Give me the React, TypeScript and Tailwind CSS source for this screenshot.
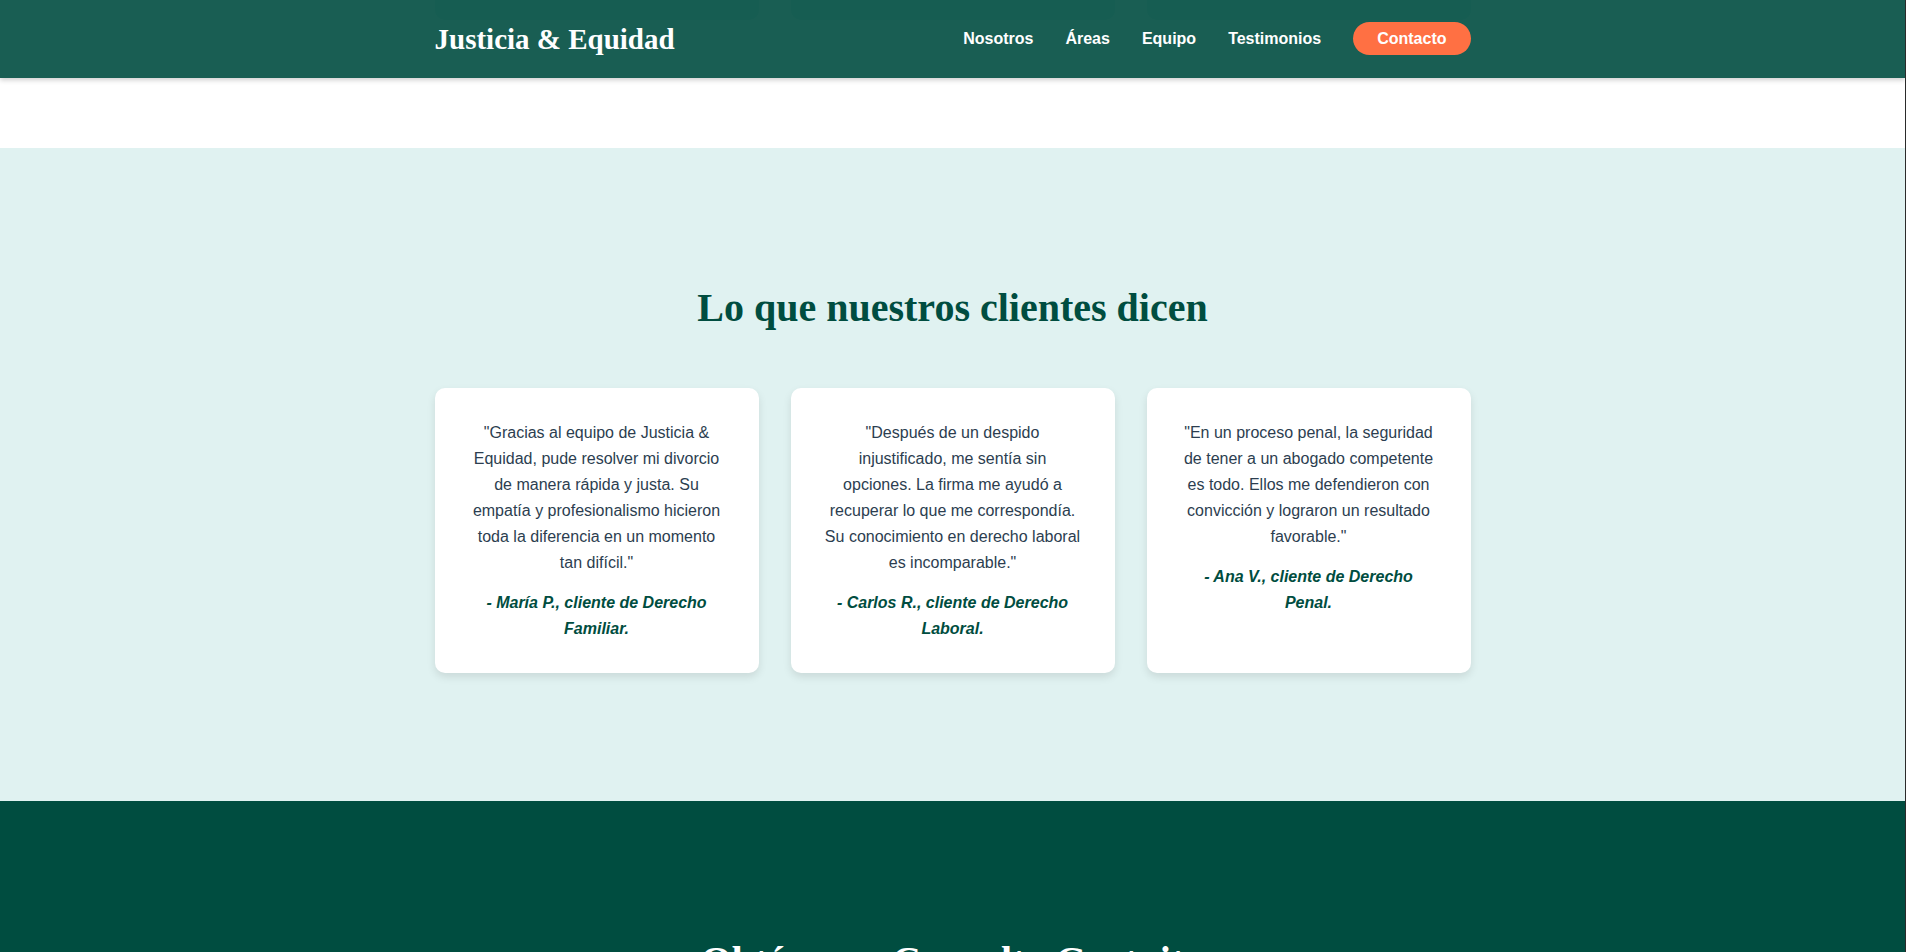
const links = [
  { label: "Nosotros", href: "#nosotros" },
  { label: "Áreas", href: "#areas" },
  { label: "Equipo", href: "#equipo" },
  { label: "Testimonios", href: "#testimonios" },
];

const testimonials = [
  {
    quote:
      '"Gracias al equipo de Justicia & Equidad, pude resolver mi divorcio de manera rápida y justa. Su empatía y profesionalismo hicieron toda la diferencia en un momento tan difícil."',
    author: "- María P., cliente de Derecho Familiar.",
  },
  {
    quote:
      '"Después de un despido injustificado, me sentía sin opciones. La firma me ayudó a recuperar lo que me correspondía. Su conocimiento en derecho laboral es incomparable."',
    author: "- Carlos R., cliente de Derecho Laboral.",
  },
  {
    quote:
      '"En un proceso penal, la seguridad de tener a un abogado competente es todo. Ellos me defendieron con convicción y lograron un resultado favorable."',
    author: "- Ana V., cliente de Derecho Penal.",
  },
];

function Header() {
  return (
    <header className="absolute inset-x-0 top-0 z-10 bg-[#004d40]/90 py-4 text-white shadow-[0_2px_5px_rgba(0,0,0,0.2)]">
      <div className="mx-auto flex max-w-[1100px] items-center justify-between px-8">
        <a
          href="#inicio"
          className="font-['Liberation_Serif',serif] text-[29px] leading-[46px] font-bold"
        >
          Justicia &amp; Equidad
        </a>
        <nav className="flex items-center gap-8 pb-px font-bold">
          {links.map((link) => (
            <a key={link.href} href={link.href}>
              {link.label}
            </a>
          ))}
          <a
            href="#contacto"
            className="rounded-full bg-[#ff7043] px-6 py-2 leading-[17px]"
          >
            Contacto
          </a>
        </nav>
      </div>
    </header>
  );
}

function Team() {
  return (
    <section id="equipo" className="bg-white pb-32">
      <div className="mx-auto grid max-w-[1100px] grid-cols-3 gap-8 px-8">
        <div className="h-5 rounded-b-[10px] bg-[#e0f2f1]" />
        <div className="h-5 rounded-b-[10px] bg-[#e0f2f1]" />
        <div className="h-5 rounded-b-[10px] bg-[#e0f2f1]" />
      </div>
    </section>
  );
}

function Testimonials() {
  return (
    <section id="testimonios" className="bg-[#e0f2f1] py-32">
      <div className="mx-auto max-w-[1100px] px-8 text-center">
        <h2 className="mb-12 font-['Liberation_Serif',serif] text-[40px] leading-[64px] font-bold text-[#004d40]">
          Lo que nuestros clientes dicen
        </h2>
        <div className="grid grid-cols-3 gap-8">
          {testimonials.map((item) => (
            <figure
              key={item.author}
              className="rounded-[10px] bg-white px-8 pt-8 pb-[31px] shadow-[0_4px_8px_rgba(0,0,0,0.1)]"
            >
              <blockquote className="mb-[14px]">{item.quote}</blockquote>
              <figcaption className="font-bold text-[#004d40] italic">
                {item.author}
              </figcaption>
            </figure>
          ))}
        </div>
      </div>
    </section>
  );
}

function Contact() {
  return (
    <section id="contacto" className="bg-[#004d40] py-32 text-center text-white">
      <h2 className="font-['Liberation_Serif',serif] text-[40px] leading-[64px] font-bold">
        Obtén una Consulta Gratuita
      </h2>
    </section>
  );
}

export default function App() {
  return (
    <div className="relative h-screen overflow-hidden border-r border-[#2b2b2b] bg-white font-['Liberation_Sans',Arial,sans-serif] text-base leading-[26px] text-[#2c3e50]">
      <Header />
      <main>
        <Team />
        <Testimonials />
        <Contact />
      </main>
    </div>
  );
}
